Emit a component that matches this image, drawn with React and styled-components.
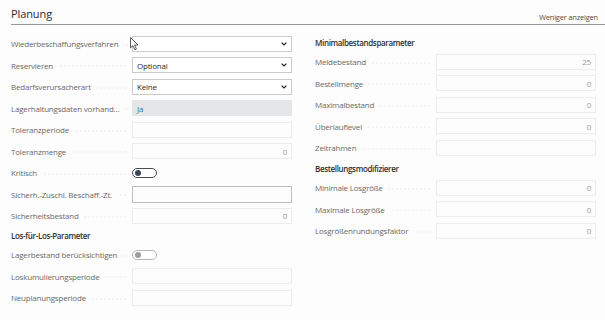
import styled, { createGlobalStyle } from "styled-components";

const GlobalStyle = createGlobalStyle`
  html, body {
    margin: 0;
    padding: 0;
    background: #fdfdfd;
  }
  body {
    font-family: "Open Sans", "Noto Sans", sans-serif;
    -webkit-font-smoothing: antialiased;
  }
`;

const Page = styled.div`
  position: relative;
  width: 605px;
  height: 320px;
  padding-left: 11px;
  box-sizing: border-box;
  overflow: hidden;
`;

const Header = styled.div`
  height: 25px;
  display: flex;
  align-items: flex-end;
  justify-content: space-between;
  border-bottom: 1px solid #999;
  padding-right: 7px;
  box-sizing: border-box;
`;

const Title = styled.div`
  font-size: 11px;
  color: #2b2b2b;
  font-weight: 500;
  line-height: 14px;
  padding-bottom: 3px;
  letter-spacing: -0.1px;
`;

const ShowLess = styled.div`
  font-size: 7.5px;
  color: #505050;
  line-height: 10px;
  padding-bottom: 2px;
  letter-spacing: -0.2px;
`;

const Columns = styled.div`
  display: grid;
  grid-template-columns: 281px 281px;
  column-gap: 23px;
  padding-top: 8px;
`;

const Column = styled.div`
  display: flex;
  flex-direction: column;
`;

const SectionTitle = styled.div`
  height: ${(p) => p.$h || 18}px;
  display: flex;
  align-items: center;
  padding-top: ${(p) => p.$pt || 0}px;
  box-sizing: border-box;
  font-size: 8px;
  font-weight: 600;
  letter-spacing: -0.35px;
  color: #2f2f2f;
`;

const Row = styled.div`
  height: 21.5px;
  display: grid;
  grid-template-columns: 121px 160px;
  align-items: center;
`;

const Label = styled.div`
  display: flex;
  align-items: center;
  gap: 5px;
  padding-right: 5px;
  font-size: 8px;
  letter-spacing: -0.2px;
  color: #6a6a6a;
  white-space: nowrap;
  overflow: hidden;

  &::after {
    content: "";
    flex: 1;
    min-width: 6px;
    height: 2px;
    margin-top: 2px;
    background-image: radial-gradient(circle, #cfcfcf 0.5px, transparent 0.75px);
    background-size: 4px 2px;
    background-position: right center;
  }
`;

const Field = styled.div`
  height: ${(p) => (p.$strong ? 17 : 16)}px;
  box-sizing: border-box;
  border: 1px solid
    ${(p) => (p.$strong ? "#bdbdbd" : p.$select ? "#cbcbcb" : "#ececec")};
  background: ${(p) => (p.$filled ? "#e4e6e7" : p.$select ? "#ffffff" : "#fdfdfd")};
  ${(p) => p.$filled && "border-color: #e4e6e7;"}
  display: flex;
  align-items: center;
  justify-content: ${(p) => (p.$num ? "flex-end" : "space-between")};
  padding: 0 4px 0 4px;
  font-size: 8px;
  letter-spacing: -0.2px;
  color: ${(p) => (p.$num ? "#9a9a9a" : p.$filled ? "#2f8191" : "#2c2c2c")};
`;

const Toggle = styled.div`
  width: 25px;
  height: 10px;
  box-sizing: border-box;
  border-radius: 6px;
  border: 1px solid ${(p) => (p.$dark ? "#4a4a4a" : "#b5b5b5")};
  position: relative;
  background: #fff;

  &::before {
    content: "";
    position: absolute;
    left: 1.5px;
    top: 1px;
    width: 6px;
    height: 6px;
    border-radius: 50%;
    background: ${(p) => (p.$dark ? "#3a4556" : "#9d9d9d")};
  }
`;

const Cursor = styled.svg`
  position: absolute;
  left: 130px;
  top: 37px;
`;

function Chevron() {
  return (
    <svg width="6" height="4" viewBox="0 0 6 4">
      <path d="M0.6 0.6 L3 3 L5.4 0.6" stroke="#222" strokeWidth="1.2" fill="none" />
    </svg>
  );
}

function FormRow({ label, children }) {
  return (
    <Row>
      <Label>{label}</Label>
      <div>{children}</div>
    </Row>
  );
}

function Select({ value }) {
  return (
    <Field $select>
      <span>{value}</span>
      <Chevron />
    </Field>
  );
}

function Num({ value }) {
  return <Field $num>{value}</Field>;
}

export default function App() {
  return (
    <Page>
      <GlobalStyle />
      <Header>
        <Title>Planung</Title>
        <ShowLess>Weniger anzeigen</ShowLess>
      </Header>
      <Columns>
        <Column>
          <FormRow label="Wiederbeschaffungsverfahren">
            <Select value="" />
          </FormRow>
          <FormRow label="Reservieren">
            <Select value="Optional" />
          </FormRow>
          <FormRow label="Bedarfsverursacherart">
            <Select value="Keine" />
          </FormRow>
          <FormRow label="Lagerhaltungsdaten vorhand...">
            <Field $filled>Ja</Field>
          </FormRow>
          <FormRow label="Toleranzperiode">
            <Field />
          </FormRow>
          <FormRow label="Toleranzmenge">
            <Num value="0" />
          </FormRow>
          <FormRow label="Kritisch">
            <Toggle $dark />
          </FormRow>
          <FormRow label="Sicherh.-Zuschl. Beschaff.-Zt.">
            <Field $strong />
          </FormRow>
          <FormRow label="Sicherheitsbestand">
            <Num value="0" />
          </FormRow>
          <SectionTitle $h={17.5} $pt={1}>Los-für-Los-Parameter</SectionTitle>
          <FormRow label="Lagerbestand berücksichtigen">
            <Toggle />
          </FormRow>
          <FormRow label="Loskumulierungsperiode">
            <Field />
          </FormRow>
          <FormRow label="Neuplanungsperiode">
            <Field />
          </FormRow>
        </Column>
        <Column>
          <SectionTitle>Minimalbestandsparameter</SectionTitle>
          <FormRow label="Meldebestand">
            <Num value="25" />
          </FormRow>
          <FormRow label="Bestellmenge">
            <Num value="0" />
          </FormRow>
          <FormRow label="Maximalbestand">
            <Num value="0" />
          </FormRow>
          <FormRow label="Überlauflevel">
            <Num value="0" />
          </FormRow>
          <FormRow label="Zeitrahmen">
            <Field />
          </FormRow>
          <SectionTitle $h={18.5} $pt={2}>Bestellungsmodifizierer</SectionTitle>
          <FormRow label="Minimale Losgröße">
            <Num value="0" />
          </FormRow>
          <FormRow label="Maximale Losgröße">
            <Num value="0" />
          </FormRow>
          <FormRow label="Losgrößenrundungsfaktor">
            <Num value="0" />
          </FormRow>
        </Column>
      </Columns>
      <Cursor width="9" height="14" viewBox="0 0 9 14">
        <path d="M0.5 0.5 L0.5 11 L3 8.6 L4.8 12.8 L6.4 12.1 L4.7 8 L8 8 Z" fill="#fff" stroke="#333" strokeWidth="0.8" />
      </Cursor>
    </Page>
  );
}
